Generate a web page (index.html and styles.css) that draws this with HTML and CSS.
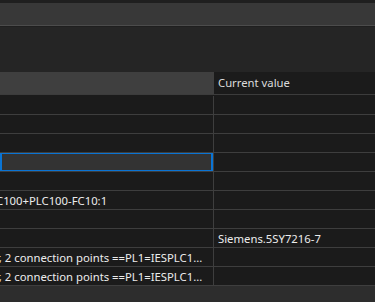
FILE: index.html
```html
<!DOCTYPE html>
<html lang="en">
<head>
    <meta charset="UTF-8">
    <meta name="viewport" content="width=device-width, initial-scale=1.0">
    <title>Properties</title>
    <link rel="stylesheet" href="styles.css">
</head>
<body>
    <div class="window">
        <div class="top-strip"></div>
        <div class="toolbar"></div>
        <div class="separator"></div>
        <div class="panel"></div>

        <div class="grid">
            <div class="row head">
                <div class="cell name"></div>
                <div class="cell value">Current value</div>
            </div>
            <div class="row">
                <div class="cell name"></div>
                <div class="cell value"></div>
            </div>
            <div class="row">
                <div class="cell name"></div>
                <div class="cell value"></div>
            </div>
            <div class="row">
                <div class="cell name"></div>
                <div class="cell value"></div>
            </div>
            <div class="row">
                <div class="cell name selected"></div>
                <div class="cell value"></div>
            </div>
            <div class="row">
                <div class="cell name"></div>
                <div class="cell value"></div>
            </div>
            <div class="row">
                <div class="cell name scrolled">C100+PLC100-FC10:1</div>
                <div class="cell value"></div>
            </div>
            <div class="row">
                <div class="cell name"></div>
                <div class="cell value"></div>
            </div>
            <div class="row">
                <div class="cell name"></div>
                <div class="cell value">Siemens.5SY7216-7</div>
            </div>
            <div class="row">
                <div class="cell name scrolled">r, 2 connection points ==PL1=IESPLC1...</div>
                <div class="cell value"></div>
            </div>
            <div class="row">
                <div class="cell name scrolled">r, 2 connection points ==PL1=IESPLC1...</div>
                <div class="cell value"></div>
            </div>
        </div>

        <div class="footer"></div>
    </div>
</body>
</html>
```

FILE: styles.css
```css
* {
    margin: 0;
    padding: 0;
    box-sizing: border-box;
}

body {
    font-family: 'Segoe UI', 'Noto Sans', sans-serif;
    font-size: 11.3px;
    background: #2d2d2d;
    color: #ececec;
    height: 302px;
    overflow: hidden;
}

.window {
    display: flex;
    flex-direction: column;
    height: 100%;
}

.top-strip {
    height: 3px;
    background: #1f1f1f;
}

.toolbar {
    height: 22px;
    background: #383838;
}

.separator {
    height: 2px;
    background: #1f1f1f;
    border-top: 1px solid #4c4c4c;
}

.panel {
    height: 45px;
    background: #252525;
}

.grid {
    background: #1b1b1b;
}

.row {
    display: grid;
    grid-template-columns: 214px 1fr;
    height: 19px;
    border-bottom: 1px solid #3e3e3e;
}

.row.head {
    height: 24px;
    border-bottom: 1px solid #1b1b1b;
}

.cell {
    display: flex;
    align-items: center;
    overflow: hidden;
    white-space: nowrap;
    padding-left: 4px;
}

.cell.name {
    border-right: 1px solid #3e3e3e;
    padding-left: 0;
}

.head .cell {
    height: 23px;
    border-bottom: 1px solid #3c3c3c;
    padding-bottom: 1px;
}

.head .cell.name {
    background: #3f3f3f;
    border-right: none;
}

.head .cell.value {
    color: #dcdcdc;
}

.cell.scrolled {
    text-indent: -4px;
}

.cell.selected {
    position: relative;
    background: #333333;
}

.cell.selected::after {
    content: "";
    position: absolute;
    top: -1px;
    bottom: -1px;
    left: 0;
    right: 0;
    border: 2px solid #0a74d4;
}

.footer {
    flex: 1;
    background: #2d2d2d;
}
```
